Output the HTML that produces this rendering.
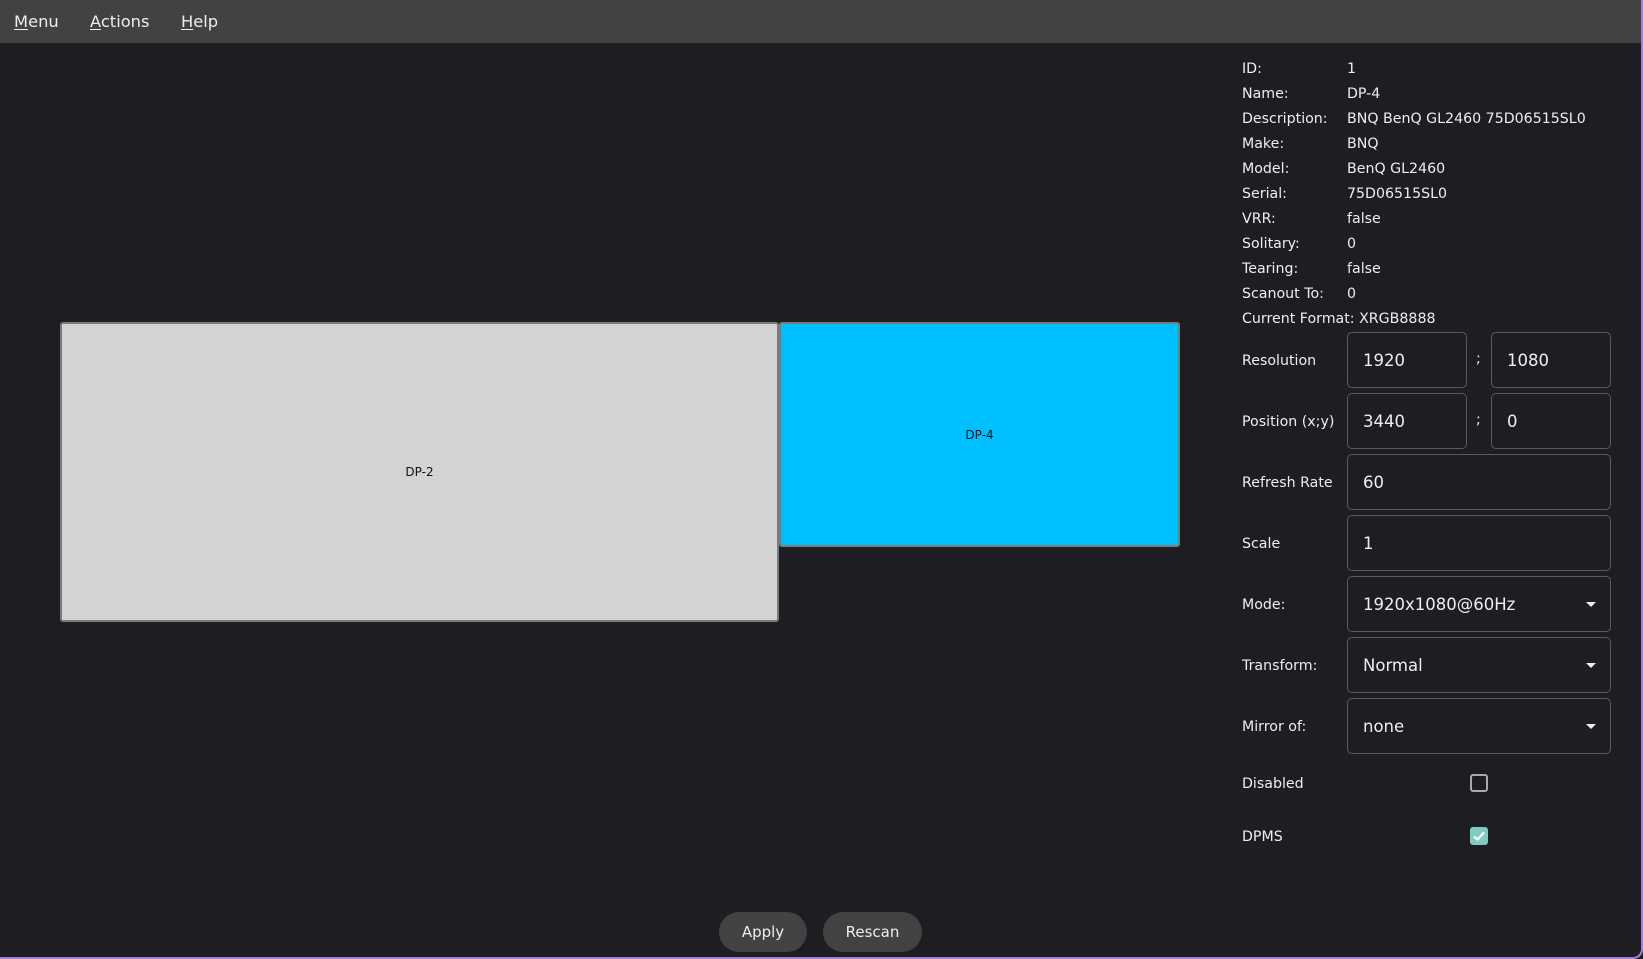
<!DOCTYPE html>
<html><head><meta charset="utf-8"><style>
*{margin:0;padding:0;box-sizing:border-box}
body{width:1643px;height:959px;overflow:hidden;background:#1e1d22;font-family:"DejaVu Sans","Liberation Sans",sans-serif;color:#eeeeee;position:relative}
.win{position:absolute;left:0;top:0;width:1643px;height:959px;border-right:2px solid #a77fd0;border-bottom:2px solid #a77fd0;border-radius:0 0 10px 0;overflow:hidden}
.bar{position:absolute;left:0;top:0;width:1643px;height:43px;background:#424242}
.bar span{position:absolute;top:12px;font-size:16.3px;color:#eee}
.bar u{text-decoration:underline;text-underline-offset:2px}
.a{position:absolute;font-size:14.2px;white-space:nowrap}
.mon{position:absolute;border:2px solid #7b7b7b;border-radius:3px;display:flex;align-items:center;justify-content:center;font-size:12px;color:#111}
.in{position:absolute;border:1px solid #5a5a5e;border-radius:5px;font-size:16.5px;padding-left:15px;display:flex;align-items:center;color:#eee}
.arr{position:absolute;right:14px;top:50%;margin-top:-2px;width:0;height:0;border-left:5px solid transparent;border-right:5px solid transparent;border-top:5px solid #eee}
.lab{position:absolute;left:1242px;font-size:14.2px}
.btn{position:absolute;top:912px;height:40px;background:#424242;border-radius:20px;font-size:15px;display:flex;align-items:center;justify-content:center;color:#eee}
</style></head><body><div class="win">
<div class="bar"><span style="left:14px"><u>M</u>enu</span><span style="left:90px"><u>A</u>ctions</span><span style="left:181px"><u>H</u>elp</span></div>

<div class="mon" style="left:60px;top:322px;width:719px;height:300px;background:#d3d3d3">DP-2</div>
<div class="mon" style="left:779px;top:322px;width:401px;height:225px;background:#00bfff">DP-4</div>

<div class="a" style="left:1242px;top:61px">ID:</div><div class="a" style="left:1347px;top:61px">1</div>
<div class="a" style="left:1242px;top:86px">Name:</div><div class="a" style="left:1347px;top:86px">DP-4</div>
<div class="a" style="left:1242px;top:111px">Description:</div><div class="a" style="left:1347px;top:111px">BNQ BenQ GL2460 75D06515SL0</div>
<div class="a" style="left:1242px;top:136px">Make:</div><div class="a" style="left:1347px;top:136px">BNQ</div>
<div class="a" style="left:1242px;top:161px">Model:</div><div class="a" style="left:1347px;top:161px">BenQ GL2460</div>
<div class="a" style="left:1242px;top:186px">Serial:</div><div class="a" style="left:1347px;top:186px">75D06515SL0</div>
<div class="a" style="left:1242px;top:211px">VRR:</div><div class="a" style="left:1347px;top:211px">false</div>
<div class="a" style="left:1242px;top:236px">Solitary:</div><div class="a" style="left:1347px;top:236px">0</div>
<div class="a" style="left:1242px;top:261px">Tearing:</div><div class="a" style="left:1347px;top:261px">false</div>
<div class="a" style="left:1242px;top:286px">Scanout To:</div><div class="a" style="left:1347px;top:286px">0</div>
<div class="a" style="left:1242px;top:311px">Current Format: XRGB8888</div>

<div class="lab" style="top:353px">Resolution</div>
<div class="in" style="left:1347px;top:332px;width:120px;height:56px">1920</div>
<div class="a" style="left:1476px;top:351px">;</div>
<div class="in" style="left:1491px;top:332px;width:120px;height:56px">1080</div>

<div class="lab" style="top:414px">Position (x;y)</div>
<div class="in" style="left:1347px;top:393px;width:120px;height:56px">3440</div>
<div class="a" style="left:1476px;top:412px">;</div>
<div class="in" style="left:1491px;top:393px;width:120px;height:56px">0</div>

<div class="lab" style="top:475px">Refresh Rate</div>
<div class="in" style="left:1347px;top:454px;width:264px;height:56px">60</div>
<div class="lab" style="top:536px">Scale</div>
<div class="in" style="left:1347px;top:515px;width:264px;height:56px">1</div>
<div class="lab" style="top:597px">Mode:</div>
<div class="in" style="left:1347px;top:576px;width:264px;height:56px">1920x1080@60Hz<div class="arr"></div></div>
<div class="lab" style="top:658px">Transform:</div>
<div class="in" style="left:1347px;top:637px;width:264px;height:56px">Normal<div class="arr"></div></div>
<div class="lab" style="top:719px">Mirror of:</div>
<div class="in" style="left:1347px;top:698px;width:264px;height:56px">none<div class="arr"></div></div>

<div class="lab" style="top:776px">Disabled</div>
<div style="position:absolute;left:1470px;top:774px;width:18px;height:18px;border:2px solid #aaa;border-radius:3px"></div>
<div class="lab" style="top:829px">DPMS</div>
<div style="position:absolute;left:1470px;top:827px;width:18px;height:18px;background:#80cbc4;border-radius:3px">
<svg width="18" height="18" viewBox="0 0 18 18"><path d="M4 9.5 L7.5 12.5 L14 5.5" stroke="#fff" stroke-width="2.2" fill="none"/></svg></div>

<div class="btn" style="left:719px;width:88px">Apply</div>
<div class="btn" style="left:823px;width:99px">Rescan</div>
</div></body></html>
